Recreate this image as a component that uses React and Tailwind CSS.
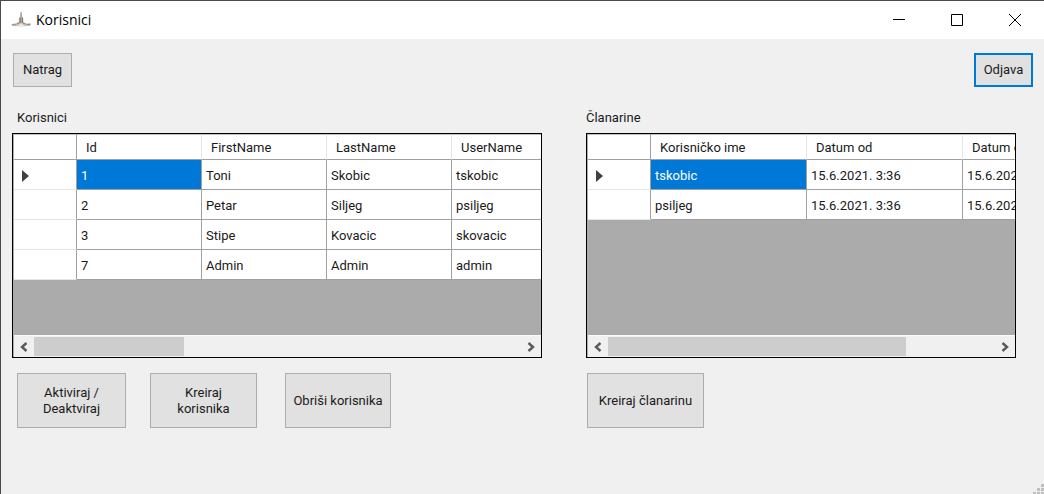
import React from "react";

const USERS = [
  ["1", "Toni", "Skobic", "tskobic"],
  ["2", "Petar", "Siljeg", "psiljeg"],
  ["3", "Stipe", "Kovacic", "skovacic"],
  ["7", "Admin", "Admin", "admin"],
];

const FEES = [
  ["tskobic", "15.6.2021. 3:36", "15.6.2021. 3:36"],
  ["psiljeg", "15.6.2021. 3:36", "15.6.2021. 3:36"],
];

function ChurchIcon() {
  return (
    <svg className="h-5 w-5" viewBox="0 0 20 20" aria-hidden="true">
      <path d="M10 2 L11 7 L12.2 8 L12.6 12.6 L16 13.4 L19.6 13 V15.6 L10 16.4 L0.6 15.8 V14 L4 13.4 L7.6 12 L8 8 L9.2 7 Z" fill="#c9c1bb" />
      <path d="M10.1 2 V7" stroke="#8f857e" strokeWidth="1" />
      <path d="M9.2 7.5 V13 M11.3 7.5 V13" stroke="#85776d" strokeWidth="1.3" />
      <path d="M1 14.8 H5 M6 14 L8.4 13 M12 13 L14.4 14 M15.5 14.6 H19.4" stroke="#978d86" strokeWidth="1.1" fill="none" />
      <path d="M6.6 16 L10 13.4 L13.4 16 Z" fill="#efebe8" />
    </svg>
  );
}

function TitleBar() {
  return (
    <header className="flex h-[38px] items-center bg-white pl-[10px]">
      <ChurchIcon />
      <h1 className="ml-[5px] flex-1 font-['Open_Sans','Noto_Sans',sans-serif] text-[14px] leading-5 text-black">Korisnici</h1>
      <button type="button" aria-label="Minimize" className="flex h-full w-[58px] items-center justify-center">
        <svg width="12" height="12" viewBox="0 0 12 12"><path d="M0 5.5H12" stroke="#000" /></svg>
      </button>
      <button type="button" aria-label="Maximize" className="flex h-full w-[58px] items-center justify-center">
        <svg width="12" height="12" viewBox="0 0 12 12"><path d="M.5 .5H11.5V11.5H.5Z" stroke="#000" fill="none" /></svg>
      </button>
      <button type="button" aria-label="Close" className="flex h-full w-[58px] items-center justify-center">
        <svg width="12" height="12" viewBox="0 0 12 12"><path d="M0 0L12 12M12 0L0 12" stroke="#000" /></svg>
      </button>
    </header>
  );
}

function Button({ className, children }) {
  return (
    <button type="button" className={`bg-[#e1e1e1] text-center leading-4 ${className}`}>
      {children}
    </button>
  );
}

function Chevron({ d }) {
  return (
    <svg width="10" height="10" viewBox="0 0 10 10">
      <path d={d} stroke="#5a5a5a" strokeWidth="2.4" fill="none" />
    </svg>
  );
}

function ScrollBar({ thumb }) {
  return (
    <div className="flex h-[22px] shrink-0 border-t border-[#fafafa] bg-[#f0f0f0]">
      <button type="button" aria-label="Scroll left" className="flex w-5 items-center justify-center">
        <Chevron d="M7.5 1L3 5L7.5 9" />
      </button>
      <div className="flex flex-1 py-px">
        <div className={`bg-[#cdcdcd] ${thumb}`} />
      </div>
      <button type="button" aria-label="Scroll right" className="flex w-5 items-center justify-center">
        <Chevron d="M2.5 1L7 5L2.5 9" />
      </button>
    </div>
  );
}

function DataGrid({ label, columns, rows, tableWidth, columnWidth, thumb }) {
  return (
    <div className="flex h-[225px] flex-col border border-black bg-[#ababab] pl-px">
      <div className="flex-1 overflow-hidden">
        <table aria-label={label} className={`table-fixed border-separate border-spacing-0 bg-white text-left ${tableWidth}`}>
          <thead>
            <tr className="h-[26px]">
              <td className="w-[63px] border-t border-r border-b border-[#a0a0a0] border-t-[#c0c0c0]" />
              {columns.map((name) => (
                <th
                  key={name}
                  scope="col"
                  className={`border-t border-r border-b border-[#a0a0a0] border-t-[#c0c0c0] border-r-[#e5e5e5] pt-0.5 pl-[9px] font-normal whitespace-nowrap ${columnWidth}`}
                >
                  {name}
                </th>
              ))}
            </tr>
          </thead>
          <tbody>
            {rows.map((row, r) => (
              <tr key={row[0]} className="h-[30px]">
                <td className="border-r border-b border-r-[#a0a0a0] border-b-[#e5e5e5] pt-0.5 pl-2">
                  {r === 0 && (
                    <svg width="7" height="12" viewBox="0 0 7 12" aria-label="Current row">
                      <path d="M0 0L7 6L0 12Z" fill="#404040" />
                    </svg>
                  )}
                </td>
                {row.map((value, c) => (
                  <td
                    key={c}
                    className={`border-r border-b border-[#a0a0a0] pt-0.5 pl-1 whitespace-nowrap ${r === 0 && c === 0 ? "bg-[#0078d7] text-white" : ""}`}
                  >
                    {value}
                  </td>
                ))}
              </tr>
            ))}
          </tbody>
        </table>
      </div>
      <ScrollBar thumb={thumb} />
    </div>
  );
}

export default function App() {
  return (
    <div className="flex min-h-screen flex-col border-t border-l border-[#4a4a4a] bg-[#f0f0f0] font-['Roboto','Liberation_Sans',sans-serif] text-[13px] leading-4 text-[#1a1a1a]">
      <TitleBar />
      <div className="flex justify-between pt-[14px] pr-[11px] pl-3">
        <Button className="h-[34px] w-[59px] border border-[#adadad]">Natrag</Button>
        <Button className="h-[34px] w-[59px] border-2 border-[#0078d7]">Odjava</Button>
      </div>
      <main className="flex gap-11 pt-[23px] pr-7 pl-[11px]">
        <section className="min-w-0 flex-[530]">
          <h2 className="mb-[7px] pl-[5px]">Korisnici</h2>
          <DataGrid
            label="Korisnici"
            columns={["Id", "FirstName", "LastName", "UserName"]}
            rows={USERS}
            tableWidth="w-[563px]"
            columnWidth="w-[125px]"
            thumb="w-[150px]"
          />
          <div className="flex pt-[15px] pl-[5px]">
            <Button className="h-[55px] w-[109px] border border-[#adadad]">Aktiviraj /<br />Deaktviraj</Button>
            <Button className="ml-6 h-[55px] w-[107px] border border-[#adadad]">Kreiraj<br />korisnika</Button>
            <Button className="ml-7 h-[55px] w-[106px] border border-[#adadad]">Obriši korisnika</Button>
          </div>
        </section>
        <section className="min-w-0 flex-[430]">
          <h2 className="mb-[7px]">Članarine</h2>
          <DataGrid
            label="Članarine"
            columns={["Korisničko ime", "Datum od", "Datum do"]}
            rows={FEES}
            tableWidth="w-[531px]"
            columnWidth="w-[156px]"
            thumb="w-[298px]"
          />
          <div className="flex pt-[15px] pl-px">
            <Button className="h-[55px] w-[117px] border border-[#adadad]">Kreiraj članarinu</Button>
          </div>
        </section>
      </main>
      <div className="mt-auto flex justify-end">
        <svg width="11" height="10" viewBox="0 0 11 10" fill="#bfbfbf" aria-hidden="true">
          <path d="M8 0h3v3h-3zM4 4h3v3h-3zM8 4h3v3h-3zM0 8h3v2h-3zM4 8h3v2h-3zM8 8h3v2h-3z" />
        </svg>
      </div>
    </div>
  );
}
